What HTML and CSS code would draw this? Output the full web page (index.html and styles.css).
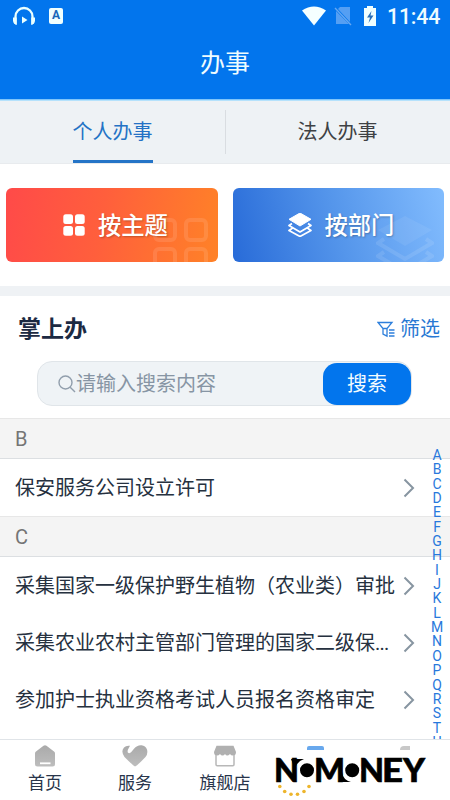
FILE: index.html
```html
<!DOCTYPE html>
<html lang="zh-CN">
<head>
<meta charset="utf-8">
<title>办事</title>
<link rel="stylesheet" href="styles.css">
</head>
<body>
<div class="app">
  <header class="header">
    <div class="status">
      <svg class="headset" width="24" height="20" viewBox="0 0 24 20"><path d="M3.500 18V10.500a8.500 8.500 0 0 1 17 0V18" fill="none" stroke="#eaffff" stroke-width="2.300"/><path d="M1 11.500h3.700V19H4q-3-1.500-3-4zM23 11.500h-3.700V19h.7q3-1.500 3-4zM10 10.500l5.500 3.500-5.500 3.500z" fill="#eaffff"/></svg>
      <span class="badge-a">A</span>
      <span class="spacer"></span>
      <svg class="wifi" width="24" height="20" viewBox="0 0 24 20"><path d="M0 4.500Q12-3.500 24 4.500L12 19.500z" fill="#f5ffff"/></svg>
      <svg class="nosim" width="18" height="20" viewBox="0 0 18 20"><path d="M6 1h10v15L4 3zM2 5l13 13H2z" fill="#559ff3"/><path d="M1 2l16 17" stroke="#67a8f1" stroke-width="1.300"/></svg>
      <svg class="battery" width="14" height="20" viewBox="0 0 14 20"><path d="M4 0h6v2h3v18H1V2h3z" fill="#f0ffff"/><path d="M8.500 5L4 11.500h3L5.500 17l5-7.500h-3z" fill="#286fb9"/></svg>
      <span class="clock">11:44</span>
    </div>
    <h1>办事</h1>
  </header>
  <nav class="tabs">
    <div class="tab active"><span>个人办事</span></div>
    <div class="tab"><span>法人办事</span></div>
  </nav>
  <section class="cards">
    <div class="card theme">
      <svg width="22" height="22" viewBox="0 0 22 22" fill="#fff"><rect x=".3" y=".3" width="9.700" height="9.700" rx="2.500"/><rect x="12" y=".3" width="9.700" height="9.700" rx="2.500"/><rect x=".3" y="12" width="9.700" height="9.700" rx="2.500"/><rect x="12" y="12" width="9.700" height="9.700" rx="2.500"/></svg>
      <span>按主题</span>
      <svg class="mark" width="56" height="46" viewBox="0 0 56 46" fill="none" stroke="#fff" stroke-opacity=".11" stroke-width="4"><rect x="3" y="4" width="20" height="20" rx="4"/><rect x="34" y="4" width="20" height="20" rx="4"/><rect x="3" y="33" width="20" height="20" rx="4"/><rect x="34" y="33" width="20" height="20" rx="4"/></svg>
    </div>
    <div class="card dept">
      <svg width="24" height="24" viewBox="0 0 24 24"><path d="M12 0l11 6.300L12 13 1 6.300z" fill="#fff" stroke="#fff" stroke-linejoin="round"/><path d="M4 10.500l-3 2 11 6.500 11-6.500-3-2M4 15.500l-3 2 11 6 11-6-3-2" fill="none" stroke="#fff" stroke-width="1.700" stroke-linejoin="round"/></svg>
      <span>按部门</span>
      <svg class="mark" width="58" height="48" viewBox="0 0 58 48"><path d="M29 2l27 14-27 16L2 16z" fill="#fff" fill-opacity=".07"/><path d="M8 25l-6 4 27 16 27-16-6-4M8 38l-6 4 27 16 27-16-6-4" fill="none" stroke="#fff" stroke-opacity=".1" stroke-width="4"/></svg>
    </div>
  </section>
  <section class="panel">
    <div class="panel-head">
      <h2>掌上办</h2>
      <div class="filter">
        <svg width="18" height="17" viewBox="0 0 18 17" fill="none" stroke="#2d7fdc" stroke-width="1.300"><path d="M1 1.500h14L10 7.500v7.700l-4-2V7.500zM6 7.500h4M12 9h5.500M12 12h5.500M12 15h5.500"/></svg>
        <span>筛选</span>
      </div>
    </div>
    <div class="search">
      <svg width="18" height="18" viewBox="0 0 18 18" fill="none" stroke="#919eac" stroke-width="1.400"><circle cx="7.500" cy="7.500" r="6.500"/><path d="M12.200 12.200L17 17"/></svg>
      <span class="placeholder">请输入搜索内容</span>
      <span class="search-btn">搜索</span>
    </div>
  </section>
  <main class="list">
    <div class="group">B</div>
    <div class="row"><span>保安服务公司设立许可</span><svg class="chev" width="12" height="20" viewBox="0 0 12 20"><path d="M1.500 1.500L10 10l-8.500 8.500"/></svg></div>
    <div class="group">C</div>
    <div class="row"><span>采集国家一级保护野生植物（农业类）审批</span><svg class="chev" width="12" height="20" viewBox="0 0 12 20"><path d="M1.500 1.500L10 10l-8.500 8.500"/></svg></div>
    <div class="row"><span>采集农业农村主管部门管理的国家二级保<span class="dots">...</span></span><svg class="chev" width="12" height="20" viewBox="0 0 12 20"><path d="M1.500 1.500L10 10l-8.500 8.500"/></svg></div>
    <div class="row"><span>参加护士执业资格考试人员报名资格审定</span><svg class="chev" width="12" height="20" viewBox="0 0 12 20"><path d="M1.500 1.500L10 10l-8.500 8.500"/></svg></div>
    <div class="index"><i>A</i><i>B</i><i>C</i><i>D</i><i>E</i><i>F</i><i>G</i><i>H</i><i>I</i><i>J</i><i>K</i><i>L</i><i>M</i><i>N</i><i>O</i><i>P</i><i>Q</i><i>R</i><i>S</i><i>T</i><i>U</i></div>
  </main>
  <footer class="tabbar">
    <div class="item">
      <svg width="24" height="22" viewBox="0 0 24 22"><path d="M10.500.8Q12-.2 13.500.8L21 6.500Q22 7.200 22 8.500V19q0 2.500-2.500 2.500h-15Q2 21.500 2 19V8.500q0-1.300 1-2z" fill="url(#g)"/><path d="M7 18.300h10.500" stroke="#fff" stroke-width="1.800"/>
      <defs><linearGradient id="g" x1="0" y1="0" x2="0" y2="1"><stop offset="0" stop-color="#aaa"/><stop offset="1" stop-color="#bdbdbd"/></linearGradient></defs></svg>
      <span>首页</span>
    </div>
    <div class="item">
      <svg width="26" height="22" viewBox="0 0 26 22"><path d="M13 21.500Q11.500 21 2.500 12-1.500 6.500 2 2.500 4 .3 8 .8L6 4.500q-1 3 .5 3.500 1.500.6 2.800-1L12 3.800Q15 0 19.500.3q4 .4 5.500 4.200 1.200 4-1.500 7.500Q15 21 13 21.500z" fill="url(#g)"/></svg>
      <span>服务</span>
    </div>
    <div class="item">
      <svg width="24" height="22" viewBox="0 0 24 22"><path d="M3.500.8h17L23 7q0 3.500-3 3.500-2 0-3-1.500-1.500 1.500-2.800 1.500-1.200 0-2.200-1.500-1 1.500-2.500 1.500T7 9q-1.200 1.500-3 1.500-3 0-3-3.500z" fill="#b0b0b0"/><path d="M3 10v9.500q0 1.200 1.200 1.200h15.600q1.200 0 1.200-1.200V10" fill="none" stroke="#b8b8b8" stroke-width="1.500"/></svg>
      <span>旗舰店</span>
    </div>
    <div class="item"><b class="peek blue"></b></div>
    <div class="item"><b class="peek"></b></div>
    <div class="brand">
      <svg width="154" height="45" viewBox="0 0 154 45">
        <g class="brand-text">
          <text x="-1" y="26.500" textLength="25" lengthAdjust="spacingAndGlyphs">N</text>
          <text x="39" y="26.500" textLength="31" lengthAdjust="spacingAndGlyphs">M</text>
          <text x="84" y="26.500" textLength="25" lengthAdjust="spacingAndGlyphs">N</text>
          <text x="107" y="26.500" textLength="21" lengthAdjust="spacingAndGlyphs">E</text>
          <text x="128" y="26.500" textLength="22" lengthAdjust="spacingAndGlyphs">Y</text>
        </g>
        <path d="M16 4h13q-7 2-9 10zM64 27h12q-8-2-9-10z"/>
        <circle cx="32" cy="15.200" r="8" stroke="#fff" stroke-width="2"/><circle cx="77.200" cy="15.200" r="8" stroke="#fff" stroke-width="2"/>
        <text class="dot-letter" x="32" y="19" text-anchor="middle">O</text>
        <text class="dot-letter" x="77.200" y="19" text-anchor="middle">O</text>
        <g fill="#edb52c"><circle cx="4.800" cy="31.500" r="1.800"/><circle cx="9.700" cy="36.500" r="1.800"/><circle cx="16" cy="39.300" r="1.800"/><circle cx="22.500" cy="39.300" r="1.800"/><circle cx="29" cy="36.500" r="1.800"/><circle cx="34" cy="31.500" r="1.800"/></g>
      </svg>
    </div>
  </footer>
</div>
</body>
</html>
```
FILE: styles.css
```css
* { box-sizing: border-box; }
body { margin: 0; background: #fff; font-family: Roboto, "Noto Sans CJK SC", sans-serif; color: #26313f; }
svg { display: block; flex: none; }
.app { width: 450px; height: 800px; overflow: hidden; display: flex; flex-direction: column; }
.header { height: 100px; flex: none; background: #0275ed; color: #effcff; border-bottom: 1px solid #80c5fa; }
.status { height: 34px; display: flex; align-items: center; padding: 0 10px 0 12px; }
.headset { margin-top: -2px; }
.badge-a { width: 14px; height: 16px; margin-left: 13px; margin-top: -2px; border-radius: 2px; background: #f0ffff; color: #1767b9; font: bold 12px/15px Roboto, sans-serif; text-align: center; }
.spacer { flex: 1; }
.wifi { margin-top: -3px; }
.nosim { margin: -2px 11px 0 8px; }
.battery { margin: -2px 10px 0 0; }
.clock { font-size: 21.3px; line-height: 34px; font-weight: 500; width: 53px; white-space: nowrap; letter-spacing: -.2px; }
h1 { margin: 0; padding-top: 11px; font-size: 25px; line-height: 38px; font-weight: 400; text-align: center; }
.tabs { height: 64px; flex: none; display: flex; background: #eef2f5; border-top: 1px solid #b5e2fc; border-bottom: 1px solid #e8ebee; }
.tab { flex: 1; display: flex; justify-content: center; padding-right: 1px; font-size: 20px; line-height: 63px; color: #3e4144; }
.tab + .tab { margin-left: -1px; padding-right: 0; background: linear-gradient(#d9dde1, #d9dde1) 0 9px / 1px 44px no-repeat; }
.tab.active { color: #2472c5; }
.tab.active span { height: 62px; border-bottom: 3px solid #2474c7; }
.cards { display: grid; grid-template-columns: 1fr 1fr; gap: 15px; padding: 24px 6px; height: 122px; flex: none; }
.card { min-width: 0; height: 74px; border-radius: 6px; display: flex; align-items: center; padding-left: 57px; color: #fff; font-size: 23.3px; line-height: 34px; position: relative; overflow: hidden; text-shadow: 1px 1px 2px rgba(0,0,0,.25); }
.card span { margin-left: 13px; padding-top: 1px; font-weight: 500; white-space: nowrap; }
.card.dept { padding-left: 55px; }
.mark { position: absolute; right: 10px; bottom: 0; }
.theme { background: linear-gradient(100deg, #ff4a49, #ff5f3c 45%, #ff8227); }
.dept { background: linear-gradient(75deg, #286bd8, #5596eb 50%, #82bcfe); }
.panel { height: 132px; flex: none; border-top: 10px solid #eff2f5; }
.panel-head { display: flex; justify-content: space-between; align-items: center; height: 65px; padding: 1px 10px 0 18px; }
h2 { margin: 0; padding-top: 1px; font-size: 23px; line-height: 32px; font-weight: 700; color: #1c2a42; }
.filter { display: flex; align-items: center; gap: 5px; color: #2878d3; font-size: 20px; line-height: 30px; }
.search { width: 375px; height: 45px; margin-left: 37px; border: 1px solid #e0e5e9; border-radius: 15px; background: #eff3f6; display: flex; align-items: center; padding-left: 20px; }
.placeholder { flex: 1; font-size: 20px; line-height: 30px; color: #8795a4; }
.search-btn { width: 88px; height: 42px; border-radius: 14px; background: #0275ed; color: #f2fcff; text-align: center; font-size: 20px; line-height: 43px; }
.list { height: 321px; flex: none; overflow: hidden; position: relative; }
.group { height: 41px; background: #f4f4f4; border-top: 1px solid #e7e7e7; border-bottom: 1px solid #dcdfe2; padding-left: 15px; font-size: 20px; line-height: 40px; color: #757575; }
.row { height: 57px; padding: 0 35px 0 15px; display: flex; justify-content: space-between; align-items: center; font-size: 20px; line-height: 30px; white-space: nowrap; }
.dots { letter-spacing: -.8px; }
.chev { fill: none; stroke: #8795a1; stroke-width: 2; }
.index { position: absolute; right: 4px; top: 30px; width: 18px; }
.index i { display: block; height: 14.35px; font: 400 14px/14.35px Roboto, sans-serif; color: #2878dc; text-align: center; }
.tabbar { height: 61px; flex: none; border-top: 1px solid #e0e4e8; display: flex; position: relative; background: #fff; }
.item { flex: 1; display: flex; flex-direction: column; align-items: center; padding-top: 5px; font-size: 17px; line-height: 24px; color: #28354b; }
.item span { margin-top: 4px; }
.peek { width: 10px; height: 4px; margin-top: 1px; border-radius: 5px 0 0; background: #c8c8c8; }
.peek.blue { width: 17px; border-radius: 2px 2px 0 0; background: #68a8ed; }
.brand { position: absolute; left: 275px; top: 15px; }
.brand-text { font: 900 31.5px Lato, sans-serif; stroke: #000; stroke-width: .6px; }
.dot-letter { font: 900 10px Lato, sans-serif; }
```
